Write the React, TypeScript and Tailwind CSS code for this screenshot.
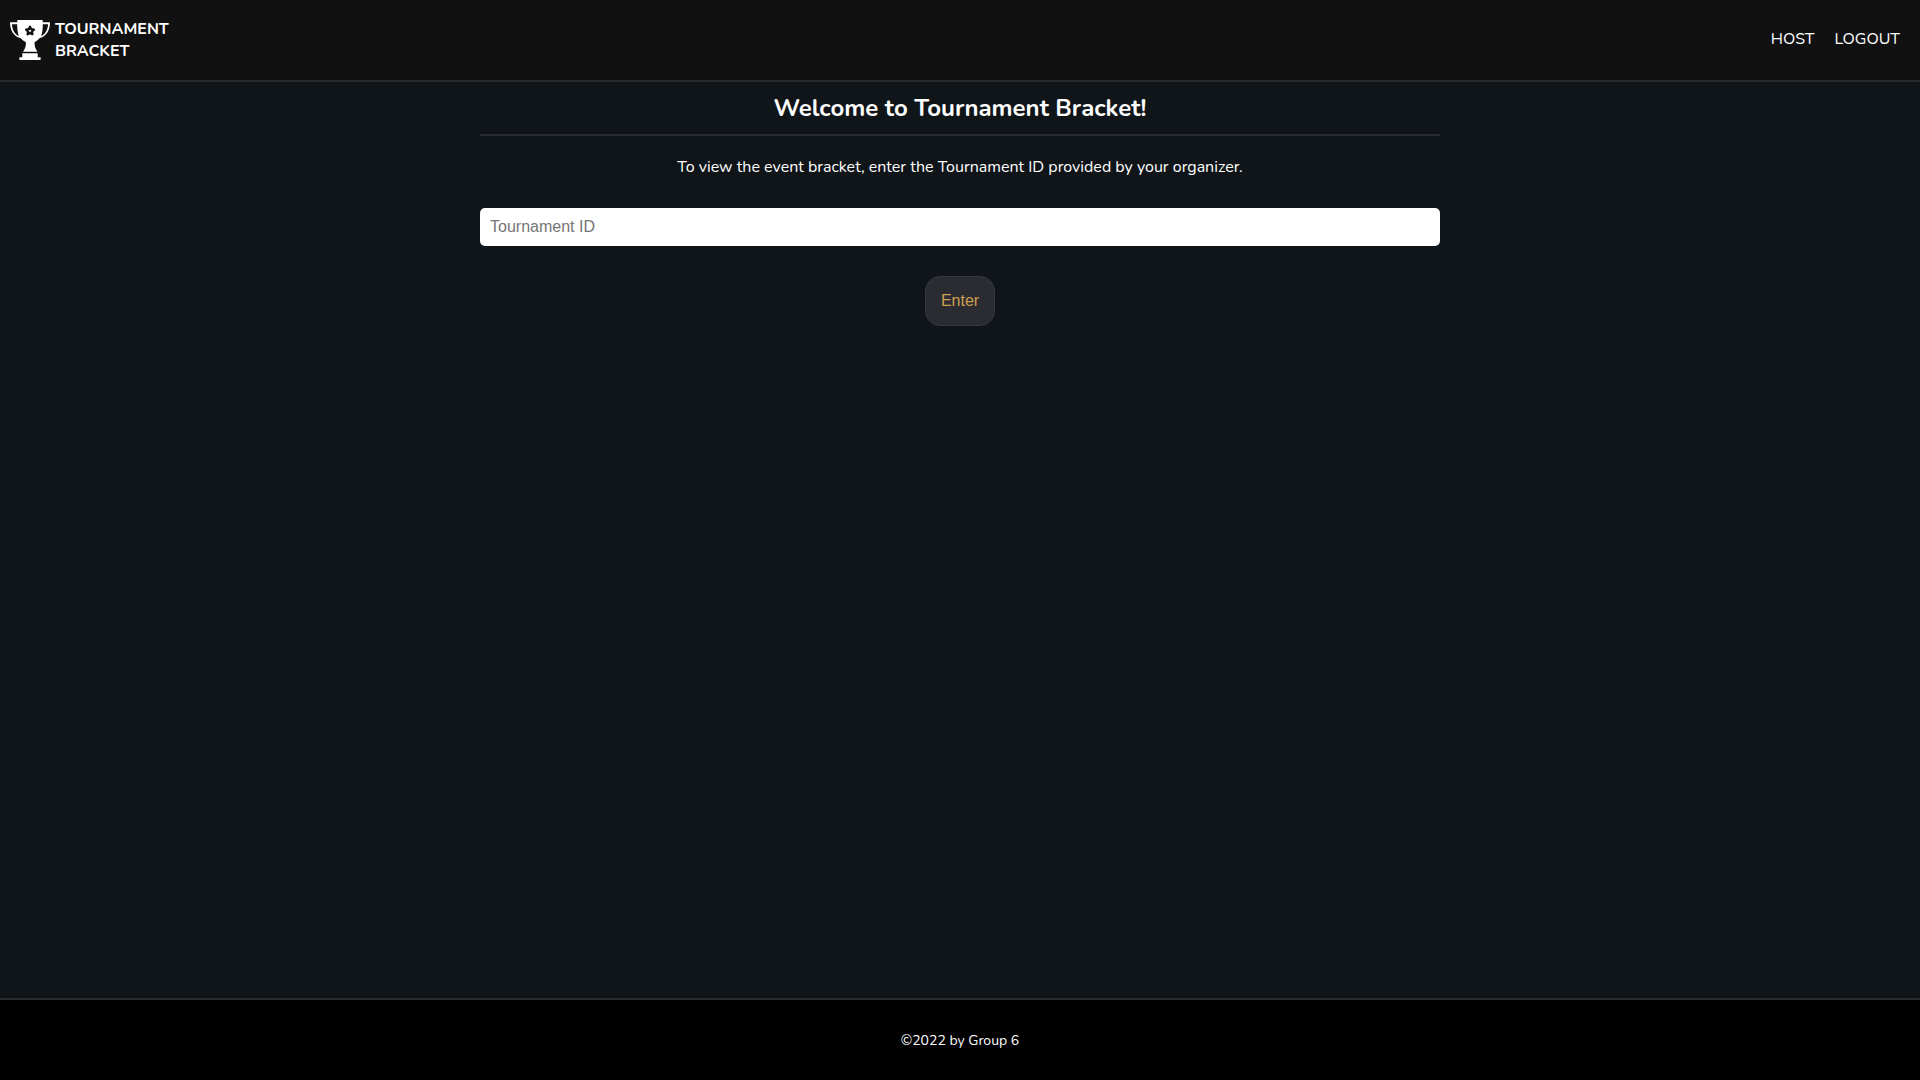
import { useState } from "react";

function TrophyLogo() {
  return (
    <svg viewBox="0 0 40 40" className="size-10 shrink-0" fill="#fff" aria-hidden="true">
      <path
        fillRule="evenodd"
        d="M7.300 0h25.400v2.200H40c0 8-3.400 14-10.200 15.800-1.300 1.500-3 3-5.200 4.200-.3 3.600.8 6.400 2.900 9.500H13c2.100-3 3.200-5.900 2.900-9.500-2.200-1.200-4.200-2.700-5.500-4.200C3.400 16.200 0 10.200 0 2.200h7.300zM1.900 4.200c.4 5.600 2.800 10 6.900 11.700C7.600 12.500 7.100 8.200 7.200 4.200zM38.100 4.200h-5.300c.1 4-.4 8.300-1.600 11.700 4.100-1.700 6.500-6.100 6.900-11.700z"
      />
      <path d="M12.300 33.300h15.400v3.900h2.900V40H9.400v-2.800h2.900z" />
      <path
        d="M20 6.700l1.200 2.500 2.700.4-2 1.900.5 2.700-2.400-1.300-2.400 1.300.5-2.700-2-1.900 2.700-.4z"
        fill="none"
        stroke="#111"
        strokeWidth="2.300"
        strokeLinejoin="round"
      />
    </svg>
  );
}

function Header() {
  return (
    <header className="flex h-[82px] items-center justify-between border-b-2 border-[#2a2a2c] bg-[#111111]">
      <a href="#home" className="flex items-center gap-[5px] pl-2.5 text-base/[22px] font-bold">
        <TrophyLogo />
        <span>
          TOURNAMENT
          <br />
          BRACKET
        </span>
      </a>
      <nav className="flex gap-5 pr-5 pb-0.5 text-base/[22px]">
        <a href="#host">HOST</a>
        <a href="#logout">LOGOUT</a>
      </nav>
    </header>
  );
}

export default function App() {
  const [id, setId] = useState("");
  return (
    <div className="flex min-h-screen flex-col bg-[#101519] font-['Nunito','Noto_Sans',sans-serif] text-white">
      <Header />
      <main className="mx-auto flex w-1/2 grow flex-col items-center">
        <h1 className="w-full border-b-2 border-[#2a2b30] pt-2.5 pb-[9px] text-center text-2xl/[33px] font-bold">
          Welcome to Tournament Bracket!
        </h1>
        <form
          className="flex w-full flex-col items-center pt-5"
          onSubmit={(e) => e.preventDefault()}
        >
          <label htmlFor="tournament-id" className="text-base/[22px]">
            To view the event bracket, enter the Tournament ID provided by your organizer.
          </label>
          <input
            id="tournament-id"
            type="text"
            placeholder="Tournament ID"
            value={id}
            onChange={(e) => setId(e.target.value)}
            className="mt-[30px] w-full rounded-[5px] bg-white px-2.5 py-[9px] font-['Liberation_Sans',sans-serif] text-base/5 text-black placeholder:text-[#757575]"
          />
          <button
            type="submit"
            className="mt-[30px] rounded-[15px] border border-[#36393f] bg-[#2a2c31] p-[15px] font-['Liberation_Sans',sans-serif] text-base/[18px] text-[#cf9f52]"
          >
            Enter
          </button>
        </form>
      </main>
      <footer className="flex h-[82px] items-center justify-center border-t-2 border-[#2a2b2d] bg-black pt-0.5 text-sm">
        ©2022 by Group 6
      </footer>
    </div>
  );
}
